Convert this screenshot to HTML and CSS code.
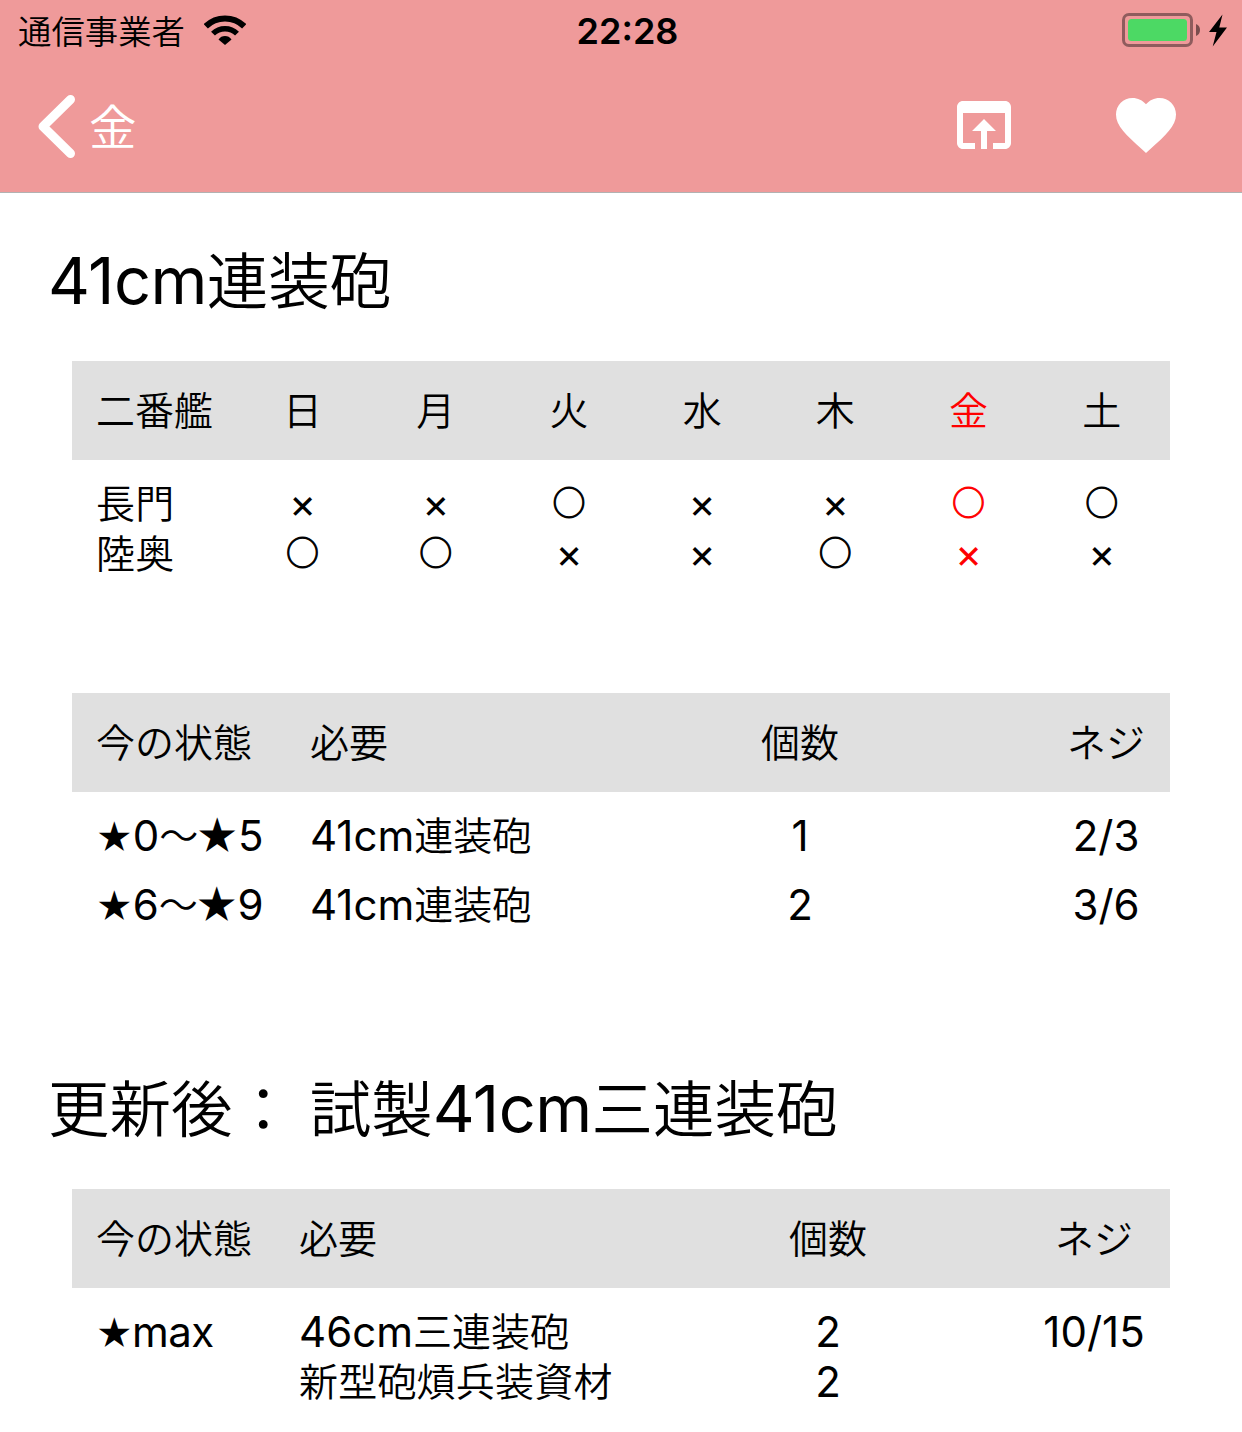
FILE: index.html
```html
<!DOCTYPE html>
<html lang="ja">
<head>
<meta charset="utf-8">
<title>41cm連装砲</title>
<link rel="stylesheet" href="styles.css">
</head>
<body>
<header class="top">
  <div class="status">
    <div class="carrier"><span class="jp">通信事業者</span>
      <svg class="wifi" width="42" height="30" viewBox="0 0 42 30"><g fill="none" stroke="#000"><path d="M1.800 11.300A27.500 27.500 0 0 1 40.200 11.300" stroke-width="6"/><path d="M9 18.600A17 17 0 0 1 33 18.600" stroke-width="5.500"/></g><path d="M14.500 24.400Q17 21 21 21T27.500 24.400L21 30Z"/></svg>
    </div>
    <div class="clock">22:28</div>
    <div class="power">
      <svg width="106" height="34" viewBox="0 0 106 34"><rect x="1.500" y="1.500" width="68" height="31" rx="5.500" fill="none" stroke="#8f5c5d" stroke-width="3"/><rect x="6" y="6" width="59" height="22" rx="3.500" fill="#4cd964"/><path d="M74 11Q78 12.500 78 17T74 23Z" fill="#7a4d4e"/><path d="M100.500 1.500L87 19H94.500L90.700 33.500L105 14.500H97.300Z"/></svg>
    </div>
  </div>
  <nav class="nav">
    <div class="back">
      <svg width="38" height="64" viewBox="0 0 38 64"><path d="M33.500 5.500L6 32.500L33.500 59.500" fill="none" stroke="#fff" stroke-width="9" stroke-linecap="round" stroke-linejoin="round"/></svg>
      <span class="jp">金</span>
    </div>
    <div class="actions">
      <svg width="72" height="72" viewBox="0 0 24 24" fill="#fff"><path d="M19 4H5c-1.110 0-2 .9-2 2v12c0 1.100.89 2 2 2h4v-2H5V8h14v10h-4v2h4c1.100 0 2-.9 2-2V6c0-1.100-.89-2-2-2zm-7 6l-4 4h3v6h2v-6h3l-4-4z"/></svg>
      <svg width="72" height="72" viewBox="0 0 24 24" fill="#fff"><path d="M12 21.350l-1.450-1.320C5.400 15.360 2 12.280 2 8.500 2 5.420 4.420 3 7.500 3c1.740 0 3.410.81 4.500 2.090C13.090 3.810 14.760 3 16.500 3 19.580 3 22 5.420 22 8.500c0 3.780-3.400 6.860-8.550 11.540L12 21.350z"/></svg>
    </div>
  </nav>
</header>
<main>
  <h1 class="title">41cm<span class="jp">連装砲</span></h1>

  <section class="table week">
    <div class="row head jp"><span>二番艦</span><b>日</b><b>月</b><b>火</b><b>水</b><b>木</b><b class="today">金</b><b>土</b></div>
    <div class="body">
      <div class="row"><span class="jp">長門</span><b>×</b><b>×</b><b class="o">○</b><b>×</b><b>×</b><b class="o today">○</b><b class="o">○</b></div>
      <div class="row"><span class="jp">陸奥</span><b class="o">○</b><b class="o">○</b><b>×</b><b>×</b><b class="o">○</b><b class="today">×</b><b>×</b></div>
    </div>
  </section>

  <section class="table cost">
    <div class="row head jp"><span>今の状態</span><span>必要</span><b>個数</b><b>ネジ</b></div>
    <div class="body spaced">
      <div class="row"><span><i class="star">★</i>0<i class="jp">～</i><i class="star big">★</i>5</span><span>41cm<i class="jp">連装砲</i></span><b>1</b><b>2/3</b></div>
      <div class="row"><span><i class="star">★</i>6<i class="jp">～</i><i class="star big">★</i>9</span><span>41cm<i class="jp">連装砲</i></span><b>2</b><b>3/6</b></div>
    </div>
  </section>

  <h2 class="title"><span class="jp">更新後： 試製</span>41cm<span class="jp">三連装砲</span></h2>

  <section class="table upgrade">
    <div class="row head jp"><span>今の状態</span><span>必要</span><b>個数</b><b>ネジ</b></div>
    <div class="body">
      <div class="row"><span class="max"><i class="star">★</i>max</span><span>46cm<i class="jp">三連装砲</i></span><b>2</b><b>10/15</b></div>
      <div class="row"><span></span><span class="jp">新型砲熕兵装資材</span><b>2</b><b></b></div>
    </div>
  </section>
</main>
</body>
</html>
```
FILE: styles.css
```css
* { box-sizing: border-box; }
body {
  margin: 0;
  background: #fff;
  color: #000;
  font-family: Inter, "Noto Sans CJK JP", sans-serif;
  font-size: 42px;
  height: 1432px;
  overflow: hidden;
}
svg { display: block; flex: none; }
b, i { font-weight: inherit; font-style: normal; }
.jp {
  font-family: "Noto Sans CJK JP", sans-serif;
  font-weight: 350;
  font-size: 39px;
}

.top {
  height: 193px;
  background: #ef9a9a;
  border-bottom: 1px solid #b2b2b2;
}
.status {
  height: 60px;
  padding: 0 14px 0 18px;
  display: grid;
  grid-template-columns: 1fr auto 1fr;
  align-items: center;
}
.carrier { display: flex; align-items: center; gap: 19px; }
.carrier .jp { font-size: 33.4px; line-height: 58px; padding-bottom: 2px; }
.wifi { margin-bottom: 2px; }
.clock { font-size: 36px; font-weight: 600; line-height: 62px; padding-left: 9px; }
.power { justify-self: end; padding-bottom: 2px; }
.nav {
  height: 130px;
  padding: 0 60px 0 37px;
  display: flex;
  justify-content: space-between;
  align-items: center;
}
.back { display: flex; align-items: center; gap: 14px; color: #fff; }
.back svg { margin-top: 2px; }
.back .jp { font-size: 47.5px; line-height: 60px; }
.actions { display: flex; gap: 90px; }

.title {
  margin: 0;
  padding-left: 48px;
  height: 168px;
  line-height: 175px;
  font-size: 65px;
  font-weight: 400;
  letter-spacing: -0.6px;
  white-space: nowrap;
}
.title .jp { font-size: 61.5px; line-height: 1; letter-spacing: 0; word-spacing: 2px; }

.table { margin: 0 72px; }
.row {
  display: grid;
  padding-left: 24px;
  line-height: 50px;
  height: 50px;
  white-space: nowrap;
}
.row > span.jp { line-height: 45px; letter-spacing: 0.2px; }
.row b { text-align: center; }
.row i { line-height: 1; }
.row i.jp { vertical-align: 1px; }
.head {
  height: 99px;
  line-height: 95px;
  background: #e0e0e0;
}
.body { padding-top: 19px; }
.spaced .row { margin-bottom: 19px; }
.today { color: #f00; }

.week { height: 332px; }
.week .row { grid-template-columns: 140px repeat(7, 133.2px); }
.week .body b { line-height: 48px; font-size: 41px; font-weight: 400; }
.week .body .o {
  font-family: "Noto Sans CJK JP", sans-serif;
  font-weight: 350;
  font-size: 33px;
  line-height: 45px;
  -webkit-text-stroke: 1px currentColor;
}

.cost { height: 328px; }
.cost .row { grid-template-columns: 214px 450px 80px 226px 80px; }
.cost .row b:last-child { grid-column: 5; }
.upgrade .row { grid-template-columns: 203px 489px 80px 174px 104px; }
.upgrade .row b:last-child { grid-column: 5; }
.star { font-size: 36px; margin: 0 -0.5px 0 -0.5px; }
.star.big { font-size: 42px; margin: 0 -1px 0 -3px; vertical-align: -1px; }
.max { letter-spacing: -0.6px; }
```
